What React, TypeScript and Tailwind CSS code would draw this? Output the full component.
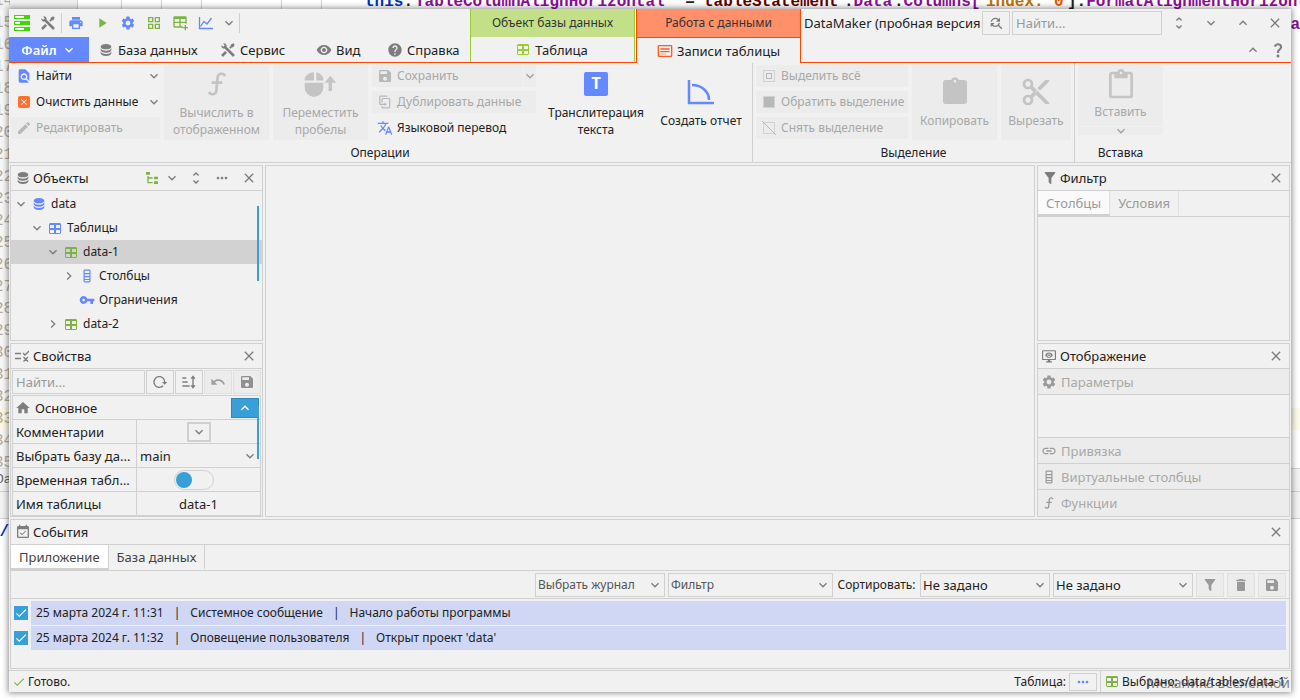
import { useState, type ReactNode } from 'react';
import clsx from 'clsx';
import {
  MdCheck,
  MdChevronRight,
  MdClose,
  MdContentCut,
  MdContentPaste,
  MdDelete,
  MdEdit,
  MdEventAvailable,
  MdExpandLess,
  MdExpandMore,
  MdFindInPage,
  MdFindReplace,
  MdHelp,
  MdHome,
  MdLink,
  MdMoreHoriz,
  MdPlayArrow,
  MdPrint,
  MdQuestionMark,
  MdSave,
  MdSettings,
  MdTranslate,
  MdUndo,
  MdUnfoldMore,
  MdVisibility,
  MdVpnKey,
} from 'react-icons/md';

const paths = {
  database:
    'M12,3C7.58,3 4,4.79 4,7C4,9.21 7.58,11 12,11C16.42,11 20,9.21 20,7C20,4.79 16.42,3 12,3M4,9V12C4,14.21 7.58,16 12,16C16.42,16 20,14.21 20,12V9C20,11.21 16.42,13 12,13C7.58,13 4,11.21 4,9M4,14V17C4,19.21 7.58,21 12,21C16.42,21 20,19.21 20,17V14C20,16.21 16.42,18 12,18C7.58,18 4,16.21 4,14Z',
  tools:
    'M21.71 20.29L20.29 21.71A1 1 0 0 1 18.88 21.71L7 9.85A3.81 3.81 0 0 1 6 10A4 4 0 0 1 2.22 4.7L4.76 7.24L5.29 6.71L6.71 5.29L7.24 4.76L4.7 2.22A4 4 0 0 1 10 6A3.81 3.81 0 0 1 9.85 7L21.71 18.88A1 1 0 0 1 21.71 20.29M2.29 18.88A1 1 0 0 0 2.29 20.29L3.71 21.71A1 1 0 0 0 5.12 21.71L10.59 16.25L7.76 13.42M20 2L16 4V6L13.83 8.17L15.83 10.17L18 8H20L22 4Z',
  tablePlus:
    'M4,2H20A2,2 0 0,1 22,4V13H20V12H13V17H16V19H4A2,2 0 0,1 2,17V4A2,2 0 0,1 4,2M4,6V10H11V6H4M13,6V10H20V6H13M4,12V17H11V12H4M19,15H21V18H24V20H21V23H19V20H16V18H19V15Z',
  func: 'M15.6,5.29C14.5,5.19 13.53,6 13.43,7.11L13.18,10H16V12H13L12.56,17.07C12.37,19.27 10.43,20.9 8.23,20.7C6.92,20.59 5.82,19.86 5.17,18.83L6.67,17.33C6.91,18.07 7.57,18.64 8.4,18.71C9.5,18.81 10.47,18 10.57,16.89L11,12H8V10H11.17L11.44,6.93C11.63,4.73 13.57,3.1 15.77,3.3C17.08,3.41 18.18,4.14 18.83,5.17L17.33,6.67C17.09,5.93 16.43,5.36 15.6,5.29Z',
  filter:
    'M14,12V19.88C14.04,20.18 13.94,20.5 13.71,20.71C13.32,21.1 12.69,21.1 12.3,20.71L10.29,18.7C10.06,18.47 9.96,18.16 10,17.87V12H9.97L4.21,4.62C3.87,4.19 3.95,3.56 4.38,3.22C4.57,3.08 4.78,3 5,3V3H19V3C19.22,3 19.43,3.08 19.62,3.22C20.05,3.56 20.13,4.19 19.79,4.62L14.03,12H14Z',
  tree: 'M3,3H9V7H3V3M15,10H21V14H15V10M15,17H21V21H15V17M13,13H7V18H13V20H7L5,20V9H7V11H13V13Z',
  reload:
    'M2 12C2 16.97 6.03 21 11 21C13.39 21 15.68 20.06 17.4 18.4L15.9 16.9C14.63 18.25 12.86 19 11 19C4.76 19 1.64 11.46 6.05 7.05C10.46 2.64 18 5.77 18 12H15L19 16H19.1L23 12H20C20 7.03 15.97 3 11 3C6.03 3 2 7.03 2 12Z',
  duplicate:
    'M11,17H4A2,2 0 0,1 2,15V3A2,2 0 0,1 4,1H16V3H4V15H11V13L15,16L11,19V17M19,21V7H8V13H6V7A2,2 0 0,1 8,5H19A2,2 0 0,1 21,7V21A2,2 0 0,1 19,23H8A2,2 0 0,1 6,21V19H8V21H19Z',
  clipboard:
    'M19,3H14.82C14.4,1.84 13.3,1 12,1C10.7,1 9.6,1.84 9.18,3H5A2,2 0 0,0 3,5V19A2,2 0 0,0 5,21H19A2,2 0 0,0 21,19V5A2,2 0 0,0 19,3M12,3A1,1 0 0,1 13,4A1,1 0 0,1 12,5A1,1 0 0,1 11,4A1,1 0 0,1 12,3',
  grid: 'M3,3H11V11H3V3M5,5V9H9V5H5M13,3H21V11H13V3M15,5V9H19V5H15M3,13H11V21H3V13M5,15V19H9V15H5M13,13H21V21H13V13M15,15V19H19V15H15Z',
  columns:
    'M8,1H16A2,2 0 0,1 18,3V21A2,2 0 0,1 16,23H8A2,2 0 0,1 6,21V3A2,2 0 0,1 8,1M8,3V7H16V3H8M8,9V12H16V9H8M8,14V17H16V14H8M8,19V21H16V19H8Z',
  records:
    'M3,3H21A2,2 0 0,1 23,5V19A2,2 0 0,1 21,21H3A2,2 0 0,1 1,19V5A2,2 0 0,1 3,3M3,5V19H21V5H3M5,8H19V10H5V8M5,12H19V14H5V12M5,16H14V17H5V16Z',
  sort: 'M2,5H8V7H2V5M2,11H10V13H2V11M2,17H13V19H2V17M18,2L22,7H19V17H22L18,22L14,17H17V7H14L18,2Z',
  monitor:
    'M2,2H22A2,2 0 0,1 24,4V17A2,2 0 0,1 22,19H14V21H17V23H7V21H10V19H2A2,2 0 0,1 0,17V4A2,2 0 0,1 2,2M2,4V17H22V4H2M12,6C15,6 17.5,8 18.5,10.5C17.5,13 15,15 12,15C9,15 6.5,13 5.5,10.5C6.5,8 9,6 12,6M12,7.5A3,3 0 0,0 9,10.5A3,3 0 0,0 12,13.5A3,3 0 0,0 15,10.5A3,3 0 0,0 12,7.5M12,9A1.5,1.5 0 0,1 13.5,10.5A1.5,1.5 0 0,1 12,12A1.5,1.5 0 0,1 10.5,10.5A1.5,1.5 0 0,1 12,9',
  mouse:
    'M6,2V9H-2V8A8,7 0 0,1 6,2M8,2A8,7 0 0,1 14,8V9H8V2M-2,11H14V15A8,8 0 0,1 -2,15V11M20,5L25,11H21.5V18H18.5V11H15L20,5Z',
};

function Icon({ name, className = 'size-4' }: { name: keyof typeof paths; className?: string }) {
  return (
    <svg viewBox="0 0 24 24" fill="currentColor" fillRule="evenodd" overflow="visible" className={clsx('shrink-0', className)}>
      <path d={paths[name]} />
    </svg>
  );
}

function TableIcon({ className }: { className?: string }) {
  return (
    <svg viewBox="0 0 12 11" fill="currentColor" fillRule="evenodd" className={clsx('h-[11px] w-3 shrink-0', className)}>
      <path d="M1 0H11L12 1V10L11 11H1L0 10V1ZM1 2V5H5V2ZM7 2V5H11V2ZM1 7V10H5V7ZM7 7V10H11V7Z" />
    </svg>
  );
}

function Logo() {
  return (
    <svg viewBox="0 0 16 16" className="size-4" fill="none">
      <path d="M0 0h16v4H0zM0 6h16v4H0zM0 12h16v4H0z" fill="#42d507" />
      <path d="M1 1h9v2H1zM1 7h5v2H1zM1 13h9v2H1z" fill="#fff" />
    </svg>
  );
}

function LineChart() {
  return (
    <svg viewBox="0 0 16 16" className="size-4" fill="none" stroke="currentColor" strokeWidth="1.3">
      <path d="M1.5 2v11.5H15" />
      <path d="M2.5 11.5l3.5-5 3 2.5L13.5 3" />
    </svg>
  );
}

function SelectionIcon({ kind }: { kind: 'all' | 'invert' | 'none' }) {
  return (
    <svg viewBox="0 0 14 14" className="size-3.5 shrink-0 text-[#b8b8b8]" fill="none" stroke="currentColor">
      <rect x="1.5" y="1.5" width="11" height="11" strokeDasharray="1 1" />
      {kind === 'all' && <rect x="4.5" y="4.5" width="5" height="5" />}
      {kind === 'invert' && <rect x="2" y="2" width="10" height="10" fill="currentColor" stroke="none" />}
      {kind === 'none' && <path d="M0 0l14 14" />}
    </svg>
  );
}

function PropsIcon() {
  return (
    <svg viewBox="0 0 14 14" className="size-3.5" fill="none" stroke="currentColor" strokeWidth="1.3">
      <path d="M0 4.5h6M0 9.5h6M8 4l2 2 4-4M8.5 8l4.5 4.5M13 8l-4.5 4.5" />
    </svg>
  );
}

function IconButton({ label, className, children, disabled }: { label: string; className?: string; children: ReactNode; disabled?: boolean }) {
  return (
    <button aria-label={label} disabled={disabled} className={clsx('flex shrink-0 items-center justify-center text-[#7d7d7d]', className)}>
      {children}
    </button>
  );
}

function SmallButton({ icon, label, disabled, arrow }: { icon: ReactNode; label: string; disabled?: boolean; arrow?: boolean }) {
  return (
    <button
      disabled={disabled}
      className={clsx('flex h-[22px] w-full items-center gap-[5px] px-1.5 whitespace-nowrap', disabled && 'bg-[#ececec] text-[#a8a8a8]')}
    >
      <span className="flex w-3.5 shrink-0 justify-center">{icon}</span>
      <span>{label}</span>
      {arrow && <MdExpandMore className="-mr-2 ml-auto size-4 shrink-0 text-[#7d7d7d]" />}
    </button>
  );
}

function BigButton({ icon, label, disabled, className }: { icon: ReactNode; label: string; disabled?: boolean; className?: string }) {
  return (
    <button
      disabled={disabled}
      className={clsx('flex h-[75px] shrink-0 flex-col items-center justify-center gap-1 leading-[17px]', disabled && 'bg-[#ececec] text-[#a8a8a8]', className)}
    >
      <span className={clsx('flex h-8 items-center', disabled && 'text-[#c4c4c4]')}>{icon}</span>
      <span className="whitespace-pre-line">{label}</span>
    </button>
  );
}

function Group({ title, className, children }: { title: string; className?: string; children: ReactNode }) {
  return (
    <section className={clsx('flex flex-col justify-between px-[3px] pt-0.5', className)}>
      <div className="flex gap-1">{children}</div>
      <h3 className="text-center leading-[18px]">{title}</h3>
    </section>
  );
}

function Panel({ icon, title, tools, className, children }: { icon: ReactNode; title: string; tools?: ReactNode; className?: string; children?: ReactNode }) {
  return (
    <section className={clsx('flex flex-col border border-[#d0d0d0]', className)}>
      <header className="flex h-[25px] shrink-0 items-center border-b border-[#d0d0d0] px-1">
        <span className="flex w-[18px] text-[#7d7d7d]">{icon}</span>
        <h2 className="flex-1">{title}</h2>
        {tools}
        <IconButton label="Закрыть" className="size-4.5">
          <MdClose className="size-4" />
        </IconButton>
      </header>
      {children}
    </section>
  );
}

function Tab({ label, active, muted }: { label: string; active?: boolean; muted?: boolean }) {
  return (
    <button
      role="tab"
      aria-selected={!!active}
      className={clsx(
        'border-r border-b-2 px-2',
        muted ? 'border-r-[#e0e0e0] text-[#9a9a9a]' : 'border-r-[#d0d0d0] text-[#444]',
        active ? 'border-b-[#d0d0d0]' : 'border-b-transparent',
        active && (muted ? 'bg-[#fafafa]' : 'bg-white'),
      )}
    >
      {label}
    </button>
  );
}

function Select({ label, options, className }: { label: string; options: string[]; className: string }) {
  return (
    <div className={clsx('grid h-6 items-center border border-[#d0d0d0]', className)}>
      <select aria-label={label} className="col-start-1 row-start-1 h-full w-full appearance-none px-0.5 outline-none">
        {options.map((option) => (
          <option key={option}>{option}</option>
        ))}
      </select>
      <MdExpandMore className="pointer-events-none col-start-1 row-start-1 mr-px size-4 justify-self-end text-[#7d7d7d]" />
    </div>
  );
}

const tree = [
  { label: 'data', pad: 'pl-1', open: true, icon: <Icon name="database" className="size-4 text-[#6488ff]" /> },
  { label: 'Таблицы', pad: 'pl-5', open: true, icon: <TableIcon className="text-[#6488ff]" /> },
  { label: 'data-1', pad: 'pl-9', open: true, selected: true, icon: <TableIcon className="text-[#7cb342]" /> },
  { label: 'Столбцы', pad: 'pl-[52px]', open: false, icon: <Icon name="columns" className="size-3.5 text-[#6488ff]" /> },
  { label: 'Ограничения', pad: 'pl-[52px]', icon: <MdVpnKey className="size-4 text-[#6488ff]" /> },
  { label: 'data-2', pad: 'pl-9', open: false, icon: <TableIcon className="text-[#7cb342]" /> },
];

const events = [
  ['25 марта 2024 г. 11:31', 'Системное сообщение', 'Начало работы программы'],
  ['25 марта 2024 г. 11:32', 'Оповещение пользователя', "Открыт проект 'data'"],
];

function EditorBackdrop() {
  return (
    <div aria-hidden className="pointer-events-none absolute inset-0 -z-10 overflow-hidden bg-white font-['Liberation_Mono','DejaVu_Sans_Mono',monospace]">
      <div className="flex h-2.5">
        <div className="w-[78px] shrink-0 border-r border-[#d0d0d0] bg-[#efefef]" />
        <div className="flex w-[282px] shrink-0 divide-x divide-[#d0d0d0]">
          <span className="w-11" />
          <span className="w-10" />
          <span className="w-10" />
          <span className="w-20" />
          <span className="w-10" />
          <span />
        </div>
        <code className="-mt-2.5 flex h-6 shrink-0 items-center pl-[5px] font-[inherit] text-[16px] font-bold whitespace-pre text-[#871094]">
          <span className="w-[50px] text-[#0033b3]">this<span className="text-[#222]">.</span></span>
          <span className="w-[261px]">TableColumnAlignHorizontal</span>
          <span className="w-7 text-center text-[#222]">=</span>
          <span className="w-[140px] text-[#5e0000]">tableStatement</span>
          <span className="w-[50px]"><i className="text-[#222] not-italic">.</i>Data</span>
          <span className="w-[92px]"><i className="text-[#222] not-italic">.</i>Columns[</span>
          <span className="w-[68px] text-[#b9730b]">index:</span>
          <span className="w-[13px] text-[#e8590c]">0</span>
          <span className="text-[#222]">].</span>
          <span>FormatAlignmentHorizontal</span>
        </code>
      </div>
      <div className="-mt-2.5 flex">
        <div className="-mt-2.5 w-[10px] overflow-hidden bg-[#f2f2f2]/60 text-[16px] leading-[22px] text-[#b5a99a]">
          {Array.from({ length: 22 }, (_, i) => (
            <div key={i} className={clsx('-ml-1.5', i === 19 && 'bg-[#fcf8e3]')}>
              {14 + i}
            </div>
          ))}
        </div>
        <div className="flex flex-1 flex-col">
          <code className="h-[408px] pt-4 text-right font-[inherit] text-[16px] font-bold text-[#871094]">a</code>
          <div className="h-[22px] bg-[#fcfae8]" />
        </div>
      </div>
      <div className="-mt-1.5 h-[51px] border-y border-[#d0d0d0] bg-[#f2f2f2] text-[13px] leading-[22px] text-[#666]">
        <div className="-ml-1 border-b border-[#d0d0d0]">Da</div>
      </div>
      <div className="-ml-2.5 pt-1 text-[16px] font-bold text-[#0033b3]">s/</div>
    </div>
  );
}

function TitleTools() {
  return (
    <div className="flex h-7 items-center text-[#7d7d7d]">
      <div className="flex w-[27px] justify-end pr-1.5"><Logo /></div>
      <IconButton label="Инструменты" className="w-6"><Icon name="tools" className="size-4" /></IconButton>
      <span className="mx-px h-5 w-px bg-[#cfcfcf]" />
      <IconButton label="Печать" className="w-[26px] text-[#6488ff]!"><MdPrint className="size-4" /></IconButton>
      <IconButton label="Запуск" className="w-[26px] text-[#7cb342]!"><MdPlayArrow className="size-4" /></IconButton>
      <IconButton label="Настройки" className="w-[26px] text-[#6488ff]!"><MdSettings className="size-4" /></IconButton>
      <IconButton label="Сетка" className="w-[26px] text-[#7cb342]!"><Icon name="grid" className="size-4" /></IconButton>
      <IconButton label="Добавить таблицу" className="w-[26px] text-[#7cb342]!"><Icon name="tablePlus" className="size-4" /></IconButton>
      <IconButton label="График" className="w-[26px] text-[#6488ff]!"><LineChart /></IconButton>
      <IconButton label="Ещё" className="w-5"><MdExpandMore className="size-4" /></IconButton>
      <span className="h-5 w-px bg-[#cfcfcf]" />
    </div>
  );
}

function Header() {
  return (
    <header className="flex h-[54px] shrink-0">
      <div className="flex w-[461px] shrink-0 flex-col border-b border-[#ff4500]">
        <TitleTools />
        <nav className="flex flex-1 text-[#222]">
          <button className="flex w-20 items-center justify-center gap-1 bg-[#6488ff] font-semibold text-white">
            Файл <MdExpandMore className="size-4" />
          </button>
          <button className="flex w-[121px] items-center gap-1 pl-[9px]">
            <Icon name="database" className="size-4 text-[#7d7d7d]" /> База данных
          </button>
          <button className="flex w-24 items-center gap-1 pl-2.5">
            <Icon name="tools" className="size-4 text-[#7d7d7d]" /> Сервис
          </button>
          <button className="flex w-[71px] items-center gap-1 pl-2.5">
            <MdVisibility className="size-4 text-[#7d7d7d]" /> Вид
          </button>
          <button className="flex items-center gap-1 pl-2.5">
            <MdHelp className="size-4 text-[#7d7d7d]" /> Справка
          </button>
        </nav>
      </div>
      <div className="flex w-[166px] shrink-0 flex-col border-b border-[#ff4500]">
        <div className="mr-px flex h-7 items-center justify-center border-x border-[#9acd32] bg-[#c3e088] text-[12px] text-[#333]">Объект базы данных</div>
        <button className="mr-px flex flex-1 items-center justify-center gap-1.5 border-x border-[#9acd32] text-[#222]">
          <TableIcon className="text-[#9acd32]" /> Таблица
        </button>
      </div>
      <div className="flex w-[165px] shrink-0 flex-col border-x border-[#ff4500]">
        <div className="flex h-[29px] items-center justify-center border-b border-[#ff4500] bg-[#ff9069] text-[12px] text-[#333]">Работа с данными</div>
        <button className="flex flex-1 items-center justify-center gap-1 text-[#222]">
          <Icon name="records" className="size-4 text-[#ff5a1f]" /> Записи таблицы
        </button>
      </div>
      <div className="flex min-w-0 flex-1 flex-col border-b border-[#ff4500]">
        <div className="flex h-7 items-center pl-[3px]">
          <h1 className="min-w-0 flex-1 overflow-hidden whitespace-nowrap text-[#222]">DataMaker (пробная версия</h1>
          <IconButton label="Найти и заменить" className="h-6 w-7 border border-[#d0d0d0]"><MdFindReplace className="size-4" /></IconButton>
          <input aria-label="Поиск" placeholder="Найти..." className="ml-0.5 h-6 w-[150px] shrink-0 border border-[#d0d0d0] px-[3px] outline-none placeholder:text-[#999]" />
          <IconButton label="Поверх окон" className="ml-px w-8"><MdUnfoldMore className="size-4" /></IconButton>
          <IconButton label="Свернуть" className="w-8"><MdExpandMore className="size-4" /></IconButton>
          <IconButton label="Развернуть" className="w-8"><MdExpandLess className="size-4" /></IconButton>
          <IconButton label="Закрыть" className="w-8"><MdClose className="size-4" /></IconButton>
        </div>
        <div className="flex flex-1 items-center justify-end gap-2 pr-1">
          <IconButton label="Скрыть ленту"><MdExpandLess className="size-4" /></IconButton>
          <IconButton label="Помощь"><MdQuestionMark className="size-4.5" /></IconButton>
        </div>
      </div>
    </header>
  );
}

function Ribbon() {
  return (
    <div className="flex h-[100px] shrink-0 border-b border-[#d0d0d0] text-[12px] text-[#222]">
      <Group title="Операции" className="w-[744px] shrink-0 border-r border-[#d0d0d0] pl-0.5">
        <div className="flex w-[149px] shrink-0 flex-col gap-1">
          <SmallButton icon={<MdFindInPage className="size-4 shrink-0 text-[#6488ff]" />} label="Найти" arrow />
          <SmallButton
            icon={<span className="flex size-3 items-center justify-center rounded-xs bg-[#ff6f32] text-white"><MdClose className="size-2.5" /></span>}
            label="Очистить данные"
            arrow
          />
          <SmallButton icon={<MdEdit className="size-4 shrink-0 text-[#b8b8b8]" />} label="Редактировать" disabled />
        </div>
        <BigButton icon={<Icon name="func" className="size-8" />} label={'Вычислить в\nотображенном'} disabled className="w-[105px]" />
        <BigButton icon={<Icon name="mouse" className="size-7" />} label={'Переместить\nпробелы'} disabled className="w-[95px]" />
        <div className="flex w-[164px] shrink-0 flex-col gap-1">
          <div className="flex gap-px">
            <SmallButton icon={<MdSave className="size-4 shrink-0 text-[#b8b8b8]" />} label="Сохранить" disabled />
            <IconButton label="Варианты сохранения" disabled className="w-3 bg-[#ececec]"><MdExpandMore className="size-4 shrink-0 text-[#a0a0a0]" /></IconButton>
          </div>
          <SmallButton icon={<Icon name="duplicate" className="size-3.5 text-[#b8b8b8]" />} label="Дублировать данные" disabled />
          <SmallButton icon={<MdTranslate className="size-4 shrink-0 text-[#6488ff]" />} label="Языковой перевод" />
        </div>
        <BigButton
          icon={<span className="flex size-6 items-center justify-center rounded-xs bg-[#6488ff] text-[16px] font-bold text-white">T</span>}
          label={'Транслитерация\nтекста'}
          className="w-[112px]"
        />
        <BigButton
          icon={
            <svg viewBox="0 0 28 28" className="size-7 text-[#6488ff]" fill="none" stroke="currentColor" strokeWidth="2.5">
              <path d="M2 2v23h25M5 7c10 0 17 7 17 15" />
            </svg>
          }
          label="Создать отчет"
          className="w-[90px] whitespace-nowrap"
        />
      </Group>
      <Group title="Выделение" className="w-[322px] shrink-0 border-r border-[#d0d0d0]">
        <div className="flex w-[152px] shrink-0 flex-col gap-1">
          <SmallButton icon={<SelectionIcon kind="all" />} label="Выделить всё" disabled />
          <SmallButton icon={<SelectionIcon kind="invert" />} label="Обратить выделение" disabled />
          <SmallButton icon={<SelectionIcon kind="none" />} label="Снять выделение" disabled />
        </div>
        <BigButton icon={<Icon name="clipboard" className="size-8" />} label="Копировать" disabled className="w-[85px]" />
        <BigButton icon={<MdContentCut className="size-8" />} label="Вырезать" disabled className="w-[70px]" />
      </Group>
      <Group title="Вставка" className="w-[91px]">
        <div className="flex flex-col gap-px">
          <button disabled className="flex h-[61px] w-[85px] flex-col items-center gap-0.5 bg-[#ececec] text-[#a8a8a8]">
            <MdContentPaste className="mt-1 size-8 text-[#c4c4c4]" />
            Вставить
          </button>
          <IconButton label="Варианты вставки" disabled className="h-2 bg-[#ececec]"><MdExpandMore className="size-4 shrink-0 text-[#a0a0a0]" /></IconButton>
        </div>
      </Group>
    </div>
  );
}

function ObjectsPanel() {
  return (
    <Panel
      icon={<Icon name="database" className="size-4" />}
      title="Объекты"
      className="relative h-44 shrink-0"
      tools={
        <div className="mr-2.5 flex items-center text-[#7d7d7d]">
          <IconButton label="Дерево" className="text-[#7cb342]!"><Icon name="tree" className="size-4" /></IconButton>
          <IconButton label="Вид дерева" className="ml-1"><MdExpandMore className="size-4" /></IconButton>
          <IconButton label="Развернуть всё" className="ml-2"><MdUnfoldMore className="size-4" /></IconButton>
          <IconButton label="Ещё" className="ml-2.5"><MdMoreHoriz className="size-4" /></IconButton>
        </div>
      }
    >
      <ul role="tree" className="pt-px text-[12px]">
        {tree.map((node) => (
          <li
            key={node.label}
            role="treeitem"
            aria-selected={!!node.selected}
            className={clsx('flex h-6 items-center', node.pad, node.selected && 'bg-[#d2d2d2]')}
          >
            <span className="flex w-4 text-[#7d7d7d]">
              {node.open === true && <MdExpandMore className="-ml-0.5 size-4" />}
              {node.open === false && <MdChevronRight className="-ml-0.5 size-4" />}
            </span>
            <span className="mr-1 flex w-4 justify-center">{node.icon}</span>
            {node.label}
          </li>
        ))}
      </ul>
      <div className="absolute top-10 right-[3px] h-[75px] w-0.5 bg-[#389fd8]" />
    </Panel>
  );
}

function PropertiesPanel() {
  const [temporary, setTemporary] = useState(false);
  const row = 'flex h-6 items-center border-t border-[#d0d0d0]';
  const name = 'flex h-full w-[124px] shrink-0 items-center border-r border-[#d0d0d0] pl-[3px] whitespace-nowrap';
  return (
    <Panel icon={<PropsIcon />} title="Свойства" className="relative min-h-0 flex-1">
      <div className="flex gap-px p-px">
        <input aria-label="Найти свойство" placeholder="Найти..." className="h-6 min-w-0 flex-1 border border-[#d0d0d0] px-[3px] outline-none placeholder:text-[#999]" />
        <IconButton label="Обновить" className="h-6 w-7 border border-[#d0d0d0]"><Icon name="reload" className="size-4" /></IconButton>
        <IconButton label="Сортировка" className="h-6 w-7 border border-[#d0d0d0]"><Icon name="sort" className="size-4" /></IconButton>
        <IconButton label="Отменить" disabled className="h-6 w-7 border border-[#e0e0e0] bg-[#ececec] text-[#a0a0a0]!"><MdUndo className="size-4" /></IconButton>
        <IconButton label="Сохранить" disabled className="h-6 w-7 border border-[#e0e0e0] bg-[#ececec] text-[#909090]!"><MdSave className="size-4" /></IconButton>
      </div>
      <div className="mx-px border border-t-0 border-[#d0d0d0]">
        <div className={clsx(row, 'gap-1 pl-0.5')}>
          <MdHome className="size-4 text-[#7d7d7d]" />
          <h3 className="flex-1">Основное</h3>
          <button aria-label="Свернуть раздел" className="mr-px flex h-5 w-7 items-center justify-center border border-[#2f86b8] bg-[#389fd8] text-white">
            <MdExpandLess className="size-4" />
          </button>
        </div>
        <div className={row}>
          <span className={name}>Комментарии</span>
          <div className="flex flex-1 justify-center">
            <IconButton label="Комментарии" className="h-5 w-6 border-2 border-[#d0d0d0]"><MdExpandMore className="size-4" /></IconButton>
          </div>
        </div>
        <div className={row}>
          <label htmlFor="db" className={name}>Выбрать базу да...</label>
          <div className="grid flex-1 items-center">
            <select id="db" className="col-start-1 row-start-1 w-full appearance-none pl-[3px] outline-none">
              <option>main</option>
            </select>
            <MdExpandMore className="pointer-events-none col-start-1 row-start-1 mr-0.5 size-4 justify-self-end text-[#7d7d7d]" />
          </div>
        </div>
        <div className={row}>
          <span className={name}>Временная табл...</span>
          <div className="flex flex-1 justify-center pr-2.5">
            <label className="flex h-5 w-10 cursor-pointer items-center rounded-full border border-[#d0d0d0] px-px has-checked:justify-end">
              <input type="checkbox" aria-label="Временная таблица" checked={temporary} onChange={(e) => setTemporary(e.target.checked)} className="sr-only" />
              <span className="size-4 rounded-full bg-[#389fd8]" />
            </label>
          </div>
        </div>
        <div className={row}>
          <label htmlFor="table-name" className={name}>Имя таблицы</label>
          <input id="table-name" defaultValue="data-1" className="min-w-0 flex-1 text-center outline-none" />
        </div>
      </div>
      <div className="absolute top-[62px] right-[3px] h-[53px] w-0.5 bg-[#389fd8]" />
    </Panel>
  );
}

function SectionRow({ icon, label }: { icon: ReactNode; label: string }) {
  return (
    <button disabled className="flex h-[26px] w-full shrink-0 items-center gap-1 border-b border-[#d0d0d0] bg-[#ececec] pl-[3px] text-[#a8a8a8] last:border-b-0">
      <span className="flex w-4 justify-center text-[#999]">{icon}</span>
      {label}
    </button>
  );
}

function EventsPanel() {
  const [checked, setChecked] = useState([true, true]);
  const tool = 'h-6 w-7 border border-[#e0e0e0] bg-[#ececec] text-[#999]!';
  return (
    <Panel icon={<MdEventAvailable className="size-4" />} title="События" className="h-[150px] shrink-0">
      <div role="tablist" className="flex h-[26px] shrink-0 border-b border-[#d0d0d0]">
        <Tab label="Приложение" active />
        <Tab label="База данных" />
      </div>
      <div className="flex h-7 shrink-0 items-center justify-end gap-[3px] border-b border-[#d0d0d0] pr-[3px]">
        <Select label="Журнал" options={['Выбрать журнал']} className="w-[130px] text-[12px] text-[#555]" />
        <Select label="Фильтр" options={['Фильтр']} className="w-[165px] text-[12px] text-[#555]" />
        <span className="w-[81px] text-center text-[12px] whitespace-nowrap">Сортировать:</span>
        <Select label="Первая сортировка" options={['Не задано']} className="w-[130px]" />
        <Select label="Вторая сортировка" options={['Не задано']} className="w-[140px]" />
        <IconButton label="Фильтр" disabled className={tool}><Icon name="filter" className="size-4" /></IconButton>
        <IconButton label="Удалить" disabled className={tool}><MdDelete className="size-4" /></IconButton>
        <IconButton label="Сохранить" disabled className={tool}><MdSave className="size-4" /></IconButton>
      </div>
      <ul className="flex flex-col gap-px px-[3px] pt-0.5 text-[12px]">
        {events.map(([time, kind, message], i) => (
          <li key={time} className="flex items-center gap-[3px]">
            <label className="grid shrink-0 place-items-center">
              <input
                type="checkbox"
                aria-label={message}
                checked={checked[i]}
                onChange={() => setChecked((prev) => prev.map((v, j) => (j === i ? !v : v)))}
                className="col-start-1 row-start-1 size-3.5 appearance-none border border-[#389fd8] checked:bg-[#389fd8]"
              />
              <MdCheck className="pointer-events-none col-start-1 row-start-1 size-3.5 text-white" />
            </label>
            <div className="flex h-6 flex-1 items-center gap-2.5 bg-[#d0d7f4] pl-[5px]">
              <time>{time}</time>
              <span>|</span>
              <span>{kind}</span>
              <span>|</span>
              <span>{message}</span>
            </div>
          </li>
        ))}
      </ul>
    </Panel>
  );
}

export default function App() {
  return (
    <div className="relative isolate flex min-h-screen flex-col px-[9px] pt-[9px] pb-2 font-['Noto_Sans','Liberation_Sans',sans-serif] text-[13px] leading-[18px] text-[#222]">
      <EditorBackdrop />
      <main className="flex flex-1 flex-col bg-[#f1f1f1] shadow-[0_0_6px_1px_rgba(0,0,0,0.45)]">
        <Header />
        <Ribbon />
        <div className="flex flex-1 flex-col gap-0.5 px-px pt-0.5 pb-px">
          <div className="flex flex-1 gap-0.5">
            <div className="flex w-[253px] shrink-0 flex-col gap-0.5">
              <ObjectsPanel />
              <PropertiesPanel />
            </div>
            <div className="flex-1 border border-[#d0d0d0]" />
            <div className="flex w-[253px] shrink-0 flex-col gap-0.5">
              <Panel icon={<Icon name="filter" className="size-4" />} title="Фильтр" className="h-44 shrink-0">
                <div role="tablist" className="flex h-[26px] border-b border-[#d0d0d0]">
                  <Tab label="Столбцы" active muted />
                  <Tab label="Условия" muted />
                </div>
              </Panel>
              <Panel icon={<Icon name="monitor" className="size-3.5" />} title="Отображение" className="flex-1">
                <SectionRow icon={<MdSettings className="size-4" />} label="Параметры" />
                <div className="flex-1 border-b border-[#d0d0d0]" />
                <SectionRow icon={<MdLink className="size-4" />} label="Привязка" />
                <SectionRow icon={<Icon name="columns" className="size-3.5" />} label="Виртуальные столбцы" />
                <SectionRow icon={<Icon name="func" className="size-4" />} label="Функции" />
              </Panel>
            </div>
          </div>
          <EventsPanel />
        </div>
        <footer className="relative flex h-[22px] shrink-0 items-center border-t border-[#d0d0d0] pl-[3px] text-[12px]">
          <MdCheck className="size-3.5 text-[#7cb342]" />
          <span className="ml-0.5 flex-1">Готово.</span>
          <span>Таблица:</span>
          <button aria-label="Выбрать таблицу" className="mx-[3px] flex h-[18px] w-7 items-center justify-center border border-[#d0d0d0]">
            <MdMoreHoriz className="size-4 text-[#6488ff]" />
          </button>
          <div className="flex h-full items-center gap-1 border-l border-[#d0d0d0] pr-1.5 pl-[5px]">
            <TableIcon className="text-[#7cb342]" />
            Выбрано: data/tables/data-1
          </div>
          <span className="absolute right-px bottom-0 text-[14px] text-[#333]/60">Механика вселенной</span>
        </footer>
      </main>
    </div>
  );
}
